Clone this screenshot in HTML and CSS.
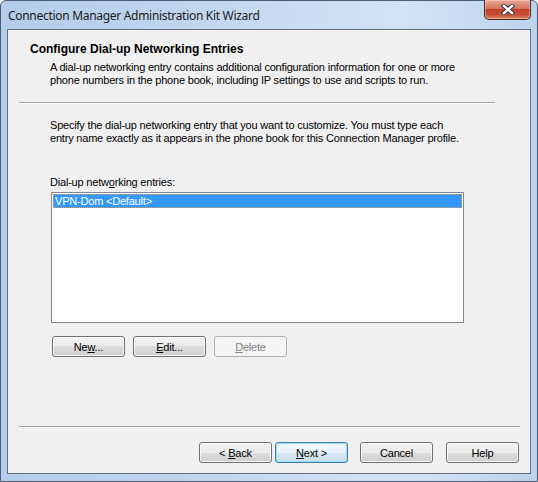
FILE: index.html
```html
<!DOCTYPE html>
<html lang="en">
<head>
    <meta charset="UTF-8">
    <title>Connection Manager Administration Kit Wizard</title>
    <link rel="stylesheet" href="styles.css">
</head>
<body>
    <div class="window">
        <div class="titlebar">
            <span class="title">Connection Manager Administration Kit Wizard</span>
            <div class="close">
                <svg width="14" height="11" viewBox="0 0 14 11">
                    <path d="M3 2 L11 9 M11 2 L3 9" stroke="#3b3b4a" stroke-width="4.4" stroke-linecap="square"/>
                    <path d="M3 2 L11 9 M11 2 L3 9" stroke="#ffffff" stroke-width="2.4" stroke-linecap="square"/>
                </svg>
            </div>
        </div>
        <div class="client">
            <div class="header">
                <h1>Configure Dial-up Networking Entries</h1>
                <p>A dial-up networking entry contains additional configuration information for one or more<br>
                    phone numbers in the phone book, including IP settings to use and scripts to run.</p>
            </div>
            <div class="sep top-sep"></div>

            <div class="page">
                <p class="intro">Specify the dial-up networking entry that you want to customize. You must type each<br>
                    entry name exactly as it appears in the phone book for this Connection Manager profile.</p>

                <label class="list-label">Dial-up netw<u>o</u>rking entries:</label>
                <div class="listbox">
                    <div class="item selected">VPN-Dom &lt;Default&gt;</div>
                </div>

                <div class="row">
                    <button class="btn">Ne<u>w</u>...</button>
                    <button class="btn"><u>E</u>dit...</button>
                    <button class="btn" disabled><u>D</u>elete</button>
                </div>
            </div>

            <div class="footer">
                <div class="sep"></div>
                <div class="nav">
                    <button class="btn">&lt; <u>B</u>ack</button>
                    <button class="btn default"><u>N</u>ext &gt;</button>
                    <button class="btn cancel">Cancel</button>
                    <button class="btn help">Help</button>
                </div>
            </div>
        </div>
    </div>
</body>
</html>
```

FILE: styles.css
```css
body {
    margin: 0;
    padding: 0;
    background: #ffffff;
}

.window {
    width: 538px;
    height: 482px;
    box-sizing: border-box;
    border: 1px solid #4b5d74;
    border-radius: 6px 6px 0 0;
    padding: 0 6px 7px 6px;
    display: flex;
    flex-direction: column;
    background: linear-gradient(to right, #b3cdea, #c2d7ef 40%, #d3e3f5 75%, #bcd3ed);
}

.titlebar {
    height: 28px;
    display: flex;
    justify-content: space-between;
    align-items: flex-start;
}

.title {
    font-family: "Noto Sans", sans-serif;
    font-size: 12px;
    color: #1a1a1a;
    margin: 6px 0 0 1px;
    letter-spacing: -0.3px;
}

.close {
    width: 45px;
    height: 19px;
    margin-top: -1px;
    border: 1px solid #4a2820;
    border-top: none;
    border-radius: 0 0 5px 5px;
    background: linear-gradient(#e9a99a, #d5735e 45%, #c0412a 50%, #c9533a 80%, #dc8a6c);
    display: flex;
    align-items: center;
    justify-content: center;
    box-shadow: inset 0 0 0 1px rgba(255, 220, 200, 0.45);
}

.client {
    flex: 1;
    display: flex;
    flex-direction: column;
    background: #f0f0f0;
    border: 1px solid #5f6f84;
    font-family: "Liberation Sans", Arial, sans-serif;
    font-size: 11px;
    letter-spacing: -0.2px;
    color: #000000;
}

.header {
    padding: 12px 0 0 22px;
}

h1 {
    margin: 0;
    font-size: 12px;
    line-height: 15px;
    font-weight: bold;
    letter-spacing: 0;
}

.header p {
    margin: 4px 0 0 20px;
    line-height: 13px;
    white-space: nowrap;
}

.sep {
    height: 0;
    border-top: 1px solid #a0a0a0;
    border-bottom: 1px solid #ffffff;
}

.top-sep {
    margin: 15px 35px 0 11px;
}

.page {
    padding: 15px 0 0 42px;
}

.intro {
    margin: 0;
    line-height: 13px;
    white-space: nowrap;
}

.list-label {
    display: block;
    margin-top: 31px;
    line-height: 13px;
}

.listbox {
    width: 409px;
    height: 127px;
    margin: 3px 0 0 1px;
    background: #ffffff;
    border: 1px solid #828790;
    padding: 1px;
}

.item {
    height: 12px;
    line-height: 12px;
    padding-left: 1px;
}

.item.selected {
    background: #3399ff;
    color: #ffffff;
    border: 1px dotted #e89a4a;
}

.row {
    display: flex;
    gap: 8px;
    margin: 13px 0 0 2px;
}

.btn {
    width: 73px;
    height: 21px;
    padding: 0;
    border: 1px solid #707070;
    border-radius: 3px;
    background: linear-gradient(#f2f2f2, #ebebeb 50%, #dddddd 50%, #cfcfcf);
    box-shadow: inset 0 0 0 1px rgba(255, 255, 255, 0.75);
    font-family: "Liberation Sans", Arial, sans-serif;
    font-size: 11px;
    letter-spacing: -0.2px;
    color: #000000;
}

.btn.default {
    border-color: #3c7fb1;
    box-shadow: inset 0 0 0 1px #9fdcf7;
    background: linear-gradient(#f0f7fb, #e6f1f8 50%, #d6e7f2 50%, #cadfec);
}

.btn:disabled {
    border-color: #adb2b5;
    background: #f4f4f4;
    box-shadow: none;
    color: #838383;
}

.footer {
    margin-top: auto;
    padding: 0 10px 10px 11px;
}

.nav {
    display: flex;
    justify-content: flex-end;
    gap: 3px;
    margin-top: 14px;
    padding-right: 1px;
}

.btn.cancel {
    margin-left: 9px;
}

.btn.help {
    margin-left: 10px;
}
```
